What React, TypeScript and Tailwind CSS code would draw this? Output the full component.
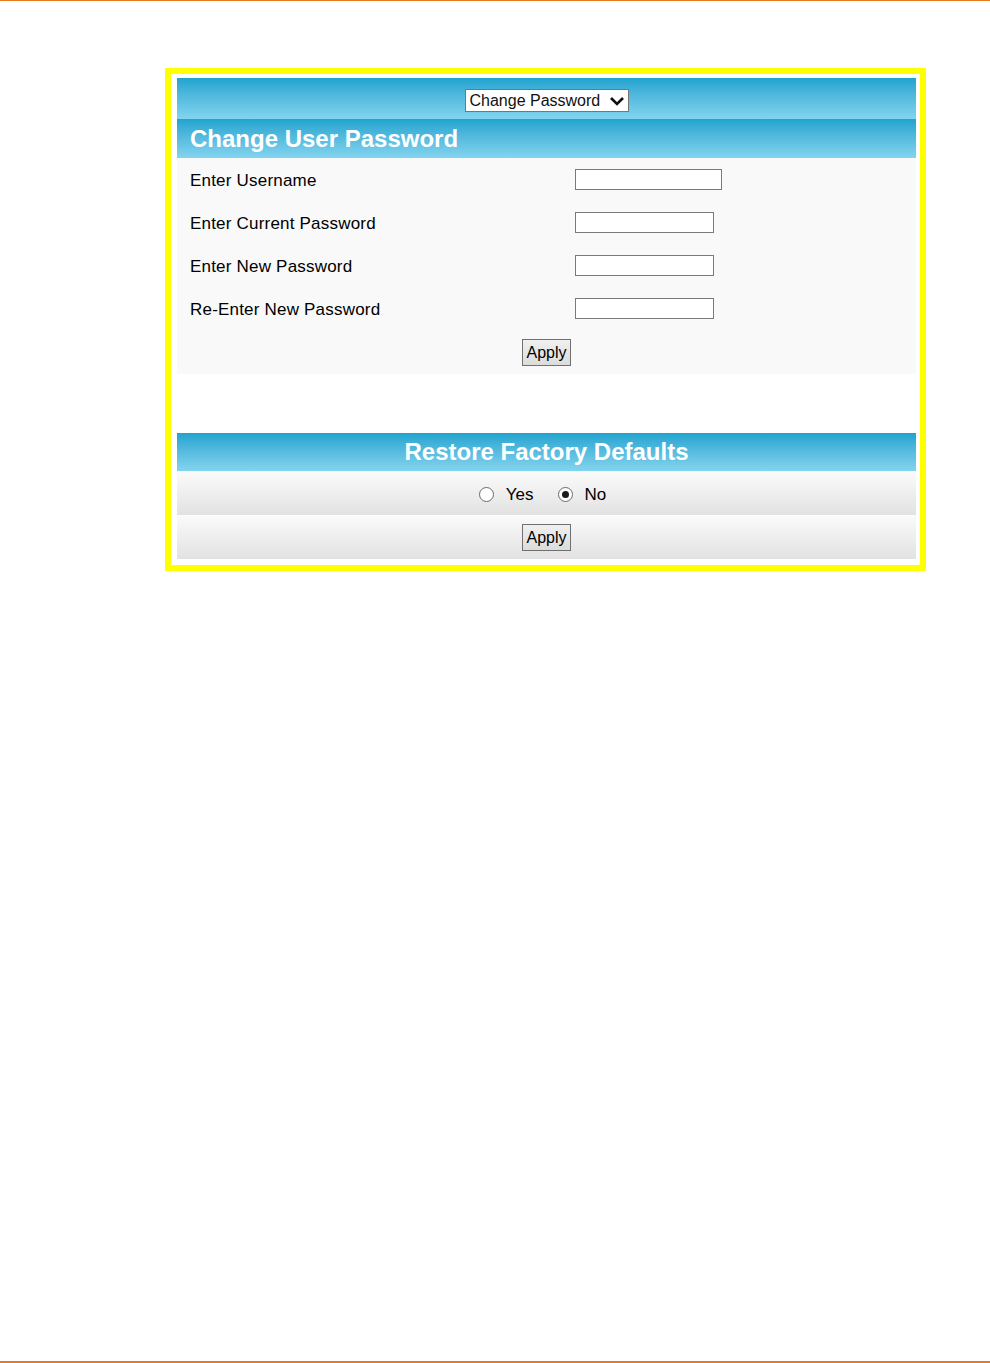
import React from "react";

const font = { fontFamily: '"Liberation Sans", Arial, sans-serif' };

function Row({ label, wide }: { label: string; wide?: boolean }) {
  return (
    <div className="flex h-[43px] items-center">
      <div className="w-[398px] pl-[13px] pt-[2px] text-[17px] tracking-[0.2px] text-black">{label}</div>
      <div
        className={`h-[21px] border border-[#7a7a7a] bg-white ${wide ? "w-[147px]" : "w-[139px]"}`}
      />
    </div>
  );
}

function ApplyButton() {
  return (
    <div className="flex h-[27px] w-[49px] items-center justify-center border border-[#707070] bg-gradient-to-b from-[#f0f0f0] to-[#dcdcdc] text-[16px] text-black">
      Apply
    </div>
  );
}

function Radio({ checked }: { checked?: boolean }) {
  return (
    <span className="flex h-[15px] w-[15px] items-center justify-center rounded-full border border-[#6a6a6a] bg-white">
      {checked && <span className="h-[7px] w-[7px] rounded-full bg-[#1a1a1a]" />}
    </span>
  );
}

export default function App() {
  return (
    <div className="flex h-[1363px] w-[990px] flex-col bg-white" style={font}>
      <div className="h-px bg-[#e97a1f]" />
      <div className="pl-[165px] pt-[67px]">
        <div className="w-[761px] border-[6px] border-[#ffff00] bg-white pb-[6px] pl-[6px] pr-[4px] pt-[4px]">
          {/* dropdown bar */}
          <div className="flex h-[41px] justify-center bg-gradient-to-b from-[#1ca4cf] to-[#82d4ef] pt-[11px]">
            <div className="flex h-[23px] w-[164px] items-center justify-between border border-[#767676] bg-white pl-[4px] pr-[3px] text-[16px] leading-none text-[#111]">
              <span>Change Password</span>
              <svg width="16" height="12" viewBox="0 0 16 12">
                <path d="M2 3 L8 9 L14 3" fill="none" stroke="#111" strokeWidth="2.6" />
              </svg>
            </div>
          </div>
          {/* header */}
          <div className="flex h-[39px] items-center bg-gradient-to-b from-[#1ca4cf] to-[#82d4ef] pl-[13px] text-[24px] font-bold text-white">
            Change User Password
          </div>
          {/* form */}
          <div className="bg-[#f9f9f9]">
            <Row label="Enter Username" wide />
            <Row label="Enter Current Password" />
            <Row label="Enter New Password" />
            <Row label="Re-Enter New Password" />
            <div className="flex h-[44px] items-center justify-center pt-[1px]">
              <ApplyButton />
            </div>
          </div>
          <div className="h-[59px]" />
          {/* restore */}
          <div className="flex h-[38px] items-center justify-center bg-gradient-to-b from-[#1ca4cf] to-[#82d4ef] text-[24px] font-bold text-white">
            Restore Factory Defaults
          </div>
          <div className="flex h-[44px] items-center justify-center bg-gradient-to-b from-[#fbfbfb] to-[#e2e2e2] pr-[8px] pt-[3px] text-[17px] text-black">
            <Radio />
            <span className="ml-[12px]">Yes</span>
            <span className="ml-[24px]">
              <Radio checked />
            </span>
            <span className="ml-[12px]">No</span>
          </div>
          <div className="flex h-[44px] items-center justify-center bg-gradient-to-b from-[#fbfbfb] to-[#e2e2e2] pt-[1px]">
            <ApplyButton />
          </div>
        </div>
      </div>
      <div className="flex-1" />
      <div className="h-[2px] shrink-0 bg-[#e97a1f]" />
    </div>
  );
}
